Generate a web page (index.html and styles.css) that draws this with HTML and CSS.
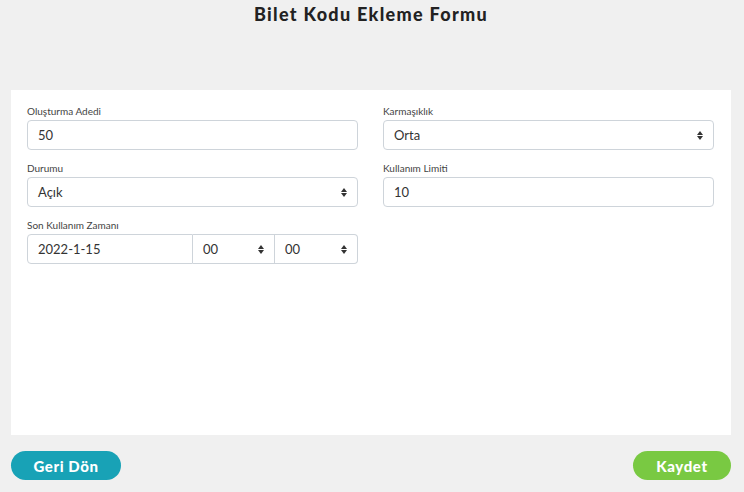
FILE: index.html
```html
<!DOCTYPE html>
<html lang="tr">
<head>
    <meta charset="UTF-8">
    <meta name="viewport" content="width=device-width, initial-scale=1.0">
    <title>Bilet Kodu Ekleme Formu</title>
    <link rel="stylesheet" href="styles.css">
</head>
<body>
    <h1>Bilet Kodu Ekleme Formu</h1>

    <div class="card">
        <div class="form-grid">
            <div class="field">
                <label>Oluşturma Adedi</label>
                <div class="control">50</div>
            </div>
            <div class="field">
                <label>Karmaşıklık</label>
                <div class="control select">Orta</div>
            </div>
            <div class="field">
                <label>Durumu</label>
                <div class="control select">Açık</div>
            </div>
            <div class="field">
                <label>Kullanım Limiti</label>
                <div class="control">10</div>
            </div>
            <div class="field">
                <label>Son Kullanım Zamanı</label>
                <div class="input-group">
                    <div class="control date">2022-1-15</div>
                    <div class="control select hour">00</div>
                    <div class="control select minute">00</div>
                </div>
            </div>
        </div>
    </div>

    <div class="actions">
        <button class="btn btn-back">Geri Dön</button>
        <button class="btn btn-save">Kaydet</button>
    </div>
</body>
</html>
```

FILE: styles.css
```css
body {
    margin: 0;
    padding: 0 13px 0 11px;
    background: #f0f0f0;
    font-family: Lato, "Open Sans", sans-serif;
    color: #333;
}

h1 {
    margin: 0;
    padding-top: 4px;
    height: 86px;
    font-size: 18px;
    line-height: 20px;
    font-weight: 900;
    letter-spacing: 1.3px;
    text-align: center;
    color: #222;
}

.card {
    background: #fff;
    height: 345px;
    box-sizing: border-box;
    padding: 15px 17px 0 16px;
}

.form-grid {
    display: grid;
    grid-template-columns: 1fr 1fr;
    column-gap: 25px;
    row-gap: 12px;
}

.field label {
    display: block;
    font-size: 10px;
    line-height: 13px;
    margin-bottom: 2px;
    color: #444;
}

.control {
    height: 30px;
    box-sizing: border-box;
    border: 1px solid #ced4da;
    border-radius: 4px;
    padding: 0 10px;
    font-size: 13px;
    line-height: 29px;
    color: #333;
}

.select {
    position: relative;
}

.select::before,
.select::after {
    content: "";
    position: absolute;
    right: 10px;
    border-left: 3px solid transparent;
    border-right: 3px solid transparent;
}

.select::before {
    top: 10px;
    border-bottom: 4px solid #333;
}

.select::after {
    top: 15px;
    border-top: 4px solid #333;
}

.input-group {
    display: flex;
}

.input-group .control {
    border-radius: 0;
}

.input-group .date {
    width: 166px;
    border-radius: 4px 0 0 4px;
}

.input-group .hour {
    width: 82px;
    border-left: none;
}

.input-group .minute {
    width: 83px;
    border-left: none;
    border-radius: 0 4px 4px 0;
}

.actions {
    display: flex;
    justify-content: space-between;
    margin-top: 16px;
}

.btn {
    border: none;
    height: 29px;
    border-radius: 15px;
    color: #fff;
    font-family: Lato, "Open Sans", sans-serif;
    font-size: 15px;
    font-weight: 900;
    letter-spacing: 0.6px;
    cursor: pointer;
}

.btn-back {
    width: 110px;
    background: #18a2b6;
}

.btn-save {
    width: 98px;
    background: #79c942;
}
```
